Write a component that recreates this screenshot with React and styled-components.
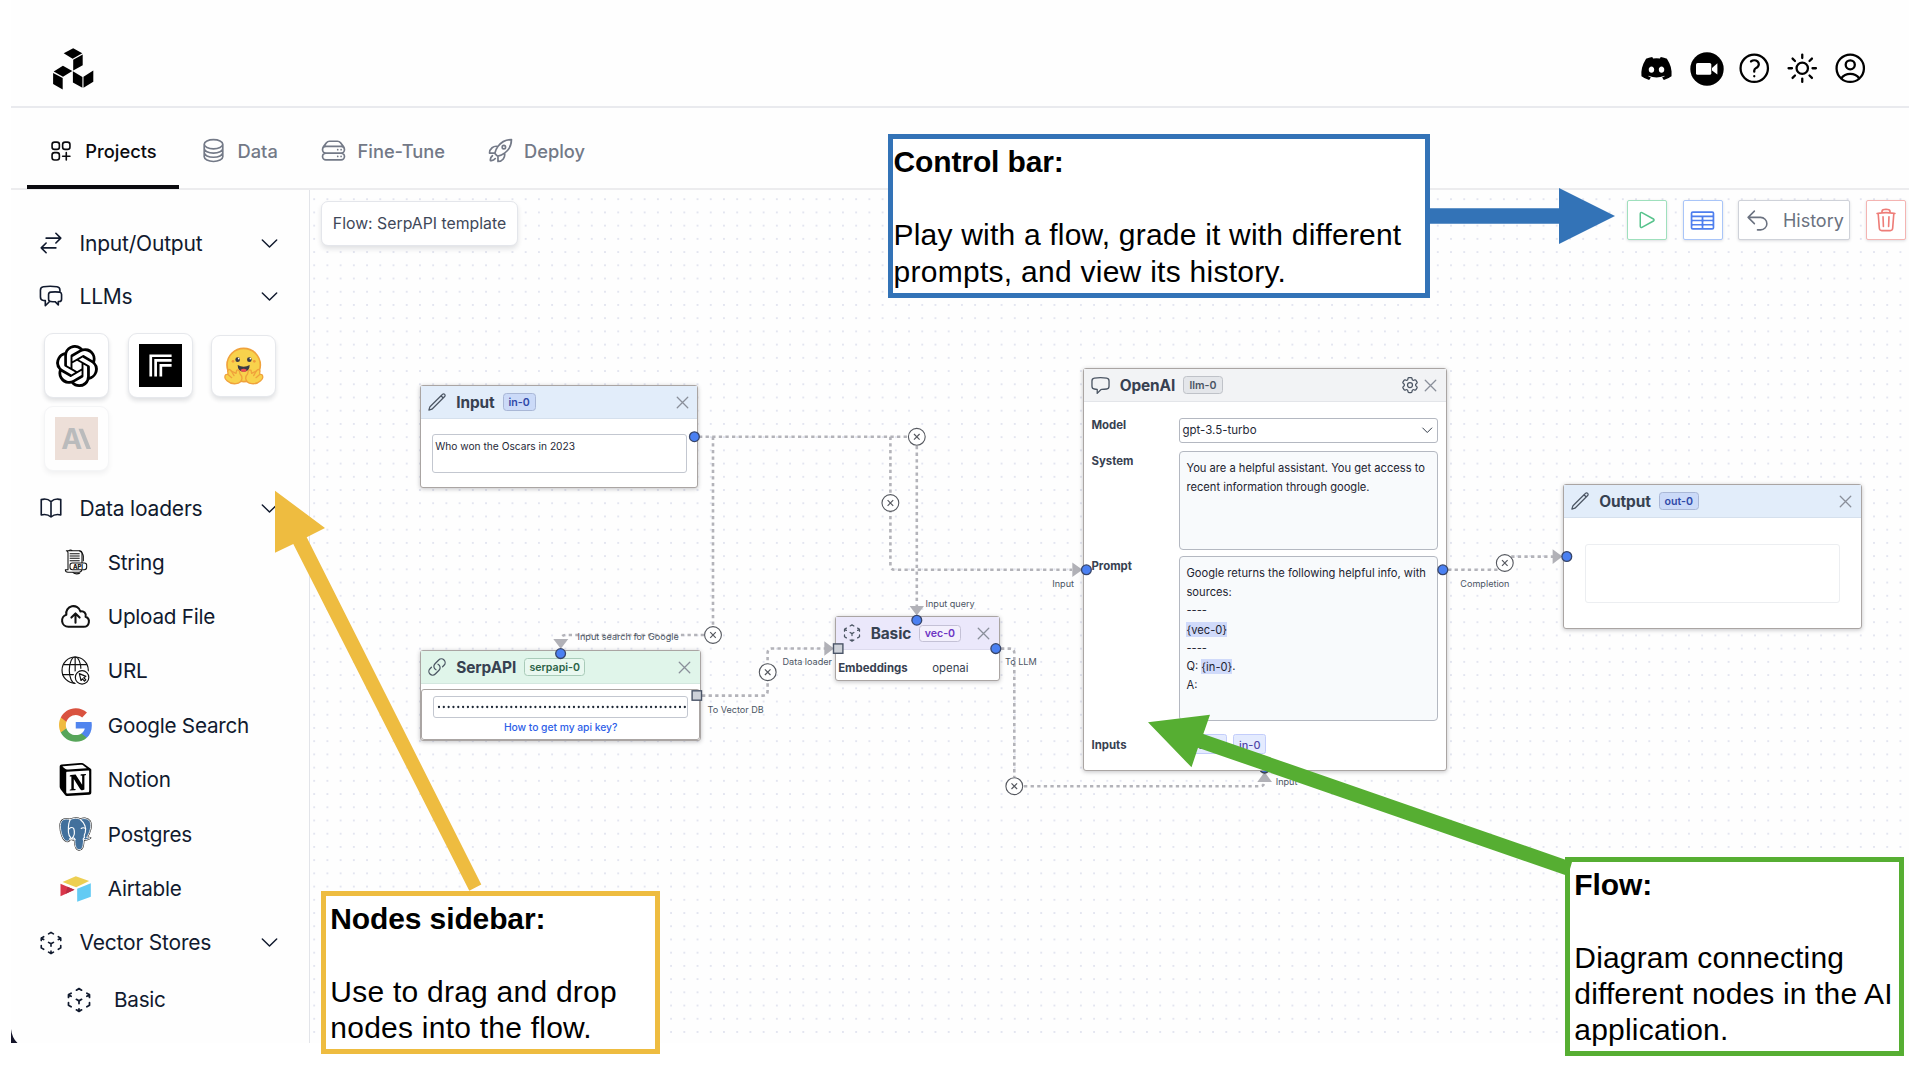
import React from "react";
import styled, { createGlobalStyle } from "styled-components";
import {
  HiOutlineSquaresPlus,
  HiOutlineCircleStack,
  HiOutlineServerStack,
  HiOutlineRocketLaunch,
  HiOutlineArrowsRightLeft,
  HiOutlineChatBubbleLeftRight,
  HiOutlineChatBubbleLeft,
  HiOutlineBookOpen,
  HiOutlineChevronDown,
  HiOutlineCloudArrowUp,
  HiOutlineCubeTransparent,
  HiOutlinePencil,
  HiOutlineLink,
  HiOutlineXMark,
  HiOutlineCog6Tooth,
  HiOutlinePlay,
  HiOutlineTableCells,
  HiOutlineArrowUturnLeft,
  HiOutlineTrash,
  HiOutlineQuestionMarkCircle,
  HiOutlineSun,
  HiOutlineUserCircle,
} from "react-icons/hi2";
import { SiOpenai, SiNotion } from "react-icons/si";
import { FaDiscord } from "react-icons/fa";

const ORIGIN_X = 310;
const ORIGIN_Y = 190;
const UI_FONT = '"Inter", "Liberation Sans", sans-serif';
const NOTE_FONT = '"Liberation Sans", Arial, sans-serif';

const GlobalStyle = createGlobalStyle`
  * { box-sizing: border-box; }
  html, body { margin: 0; padding: 0; background: #fff; }
  body { font-family: ${UI_FONT}; color: #0f172a; overflow: hidden; }
  svg { display: block; flex: none; }
`;

/* ---------- shell ---------- */

const Page = styled.div`
  position: relative;
  width: 1920px;
  height: 1080px;
  overflow: hidden;
  background: #fff;
`;

const Shell = styled.div`
  display: flex;
  flex-direction: column;
  width: 1898px;
  height: 1043px;
  margin-left: 11px;
  background: #fefefe;
`;

const Header = styled.header`
  display: flex;
  justify-content: space-between;
  align-items: center;
  height: 108px;
  padding: 31px 40.5px 0 41.5px;
  border-bottom: 2px solid #e9eaee;
`;

const HeaderActions = styled.div`
  display: flex;
  align-items: center;
  color: #000;
  gap: 11.6px;
`;

const DiscordIcon = styled(FaDiscord)`
  margin-right: 6px;
`;

const TabBar = styled.nav`
  display: flex;
  align-items: stretch;
  height: 82px;
  padding-left: 16px;
  border-bottom: 2px solid #ececee;
`;

const Tab = styled.div`
  display: flex;
  align-items: center;
  gap: ${(p) => p.$gap}px;
  width: ${(p) => p.$width}px;
  padding: 8px 0 0 ${(p) => p.$pad}px;
  margin-bottom: -1px;
  border-bottom: 4px solid ${(p) => (p.$active ? "#0b0b0f" : "transparent")};
  color: ${(p) => (p.$active ? "#0b0b0f" : "#737987")};
  font-size: 18.3px;
  font-weight: 500;
  white-space: nowrap;
`;

const Body = styled.main`
  display: flex;
  flex: 1;
  min-height: 0;
`;

const CornerShade = styled.svg`
  position: absolute;
  left: 11px;
  top: 1029px;
`;

/* ---------- sidebar ---------- */

const Sidebar = styled.aside`
  display: flex;
  flex-direction: column;
  width: 299px;
  padding-top: 26.5px;
  border-right: 1px solid #e2e4e9;
`;

const Section = styled.div`
  display: flex;
  align-items: center;
  flex: none;
  height: 53px;
  padding: 0 28.5px 0 27px;
  font-size: 21px;
  letter-spacing: -0.2px;
  color: #111a2e;
`;

const SectionTitle = styled.span`
  flex: 1;
  margin-left: 15.5px;
  white-space: nowrap;
`;

const Tiles = styled.div`
  display: flex;
  flex-wrap: wrap;
  align-items: center;
  gap: 7px 18.5px;
  padding: 10.5px 28px 10.5px 33px;
  height: 159px;
`;

const Tile = styled.div`
  display: flex;
  align-items: center;
  justify-content: center;
  width: 65px;
  height: ${(p) => p.$height || 65}px;
  border: 1.5px solid #e6e8ec;
  border-radius: 9px;
  background: #fff;
  box-shadow: 0 3px 4px rgba(15, 23, 42, 0.12);
  opacity: ${(p) => (p.$faded ? 0.4 : 1)};
`;

const Loaders = styled.div`
  display: flex;
  flex-direction: column;
  padding: 0.5px 0;
`;

const SubItem = styled.div`
  display: flex;
  align-items: center;
  height: ${(p) => p.$height || 54.4}px;
  padding-left: ${(p) => p.$indent || 48}px;
  gap: ${(p) => p.$gap || 15.8}px;
  font-size: 20.7px;
  letter-spacing: -0.25px;
  color: #111a2e;
  white-space: nowrap;
`;

const SubIcon = styled.span`
  display: flex;
  align-items: center;
  justify-content: center;
  width: ${(p) => p.$size || 33}px;
`;

/* ---------- canvas ---------- */

const Canvas = styled.section`
  position: relative;
  flex: 1;
  overflow: hidden;
  background-color: #fefefe;
  background-image: radial-gradient(circle, #e3e5f0 0.7px, transparent 1.1px);
  background-size: 13.22px 13.22px;
  background-position: 10.8px 2.6px;
`;

const EdgeLayer = styled.svg`
  position: absolute;
  left: 0;
  top: 0;
  pointer-events: none;
`;

const FlowChip = styled.div`
  position: absolute;
  left: 11px;
  top: 10.5px;
  display: flex;
  align-items: center;
  justify-content: center;
  width: 197px;
  height: 45px;
  border: 1.5px solid #e4e6eb;
  border-radius: 7px;
  background: #fff;
  box-shadow: 0 3px 5px rgba(15, 23, 42, 0.12);
  color: #3f4859;
  font-size: 15.8px;
  white-space: nowrap;
`;

const Controls = styled.div`
  position: absolute;
  left: 1317px;
  top: 10.3px;
  display: flex;
  gap: 15.7px;
`;

const ControlButton = styled.button`
  display: flex;
  align-items: center;
  justify-content: center;
  gap: 13px;
  width: ${(p) => p.$width || 40}px;
  height: 40px;
  padding: 0;
  border: 1.6px solid ${(p) => p.$border};
  border-radius: 2px;
  background: #fff;
  box-shadow: 0 1px 3px rgba(15, 23, 42, 0.14);
  color: ${(p) => p.$color};
  font-family: inherit;
  font-size: 18px;
`;

const Node = styled.article`
  position: absolute;
  left: ${(p) => p.$x - ORIGIN_X}px;
  top: ${(p) => p.$y - ORIGIN_Y}px;
  width: ${(p) => p.$w}px;
  height: ${(p) => p.$h}px;
  display: flex;
  flex-direction: column;
  border: 1.5px solid #aaa5a3;
  border-radius: 3px;
  background: #fff;
  box-shadow: 0 1px 4px rgba(40, 40, 50, 0.28);
`;

const NodeHeader = styled.header`
  display: flex;
  align-items: center;
  flex: none;
  height: ${(p) => p.$height || 33}px;
  padding: 0 4.5px 0 6px;
  background: ${(p) => p.$bg};
  border-bottom: 1px solid rgba(120, 130, 150, 0.12);
  color: #4b5563;
`;

const NodeTitle = styled.h3`
  margin: 0 0 0 9px;
  font-size: 15.4px;
  font-weight: 700;
  letter-spacing: -0.1px;
  color: #374151;
`;

const NodeTag = styled.span`
  display: flex;
  align-items: center;
  justify-content: center;
  width: ${(p) => p.$width}px;
  height: 17.5px;
  margin-left: 8px;
  border: 1.3px solid ${(p) => p.$border};
  border-radius: 3.5px;
  background: ${(p) => p.$bg};
  color: ${(p) => p.$color};
  font-size: 10.6px;
  font-weight: 600;
`;

const HeaderSpace = styled.span`
  flex: 1;
`;

const CloseIcon = styled(HiOutlineXMark)`
  width: 21px;
  height: 21px;
  color: #8a8f9a;
`;

const NodeContent = styled.div`
  flex: 1;
  display: flex;
  flex-direction: column;
  padding: ${(p) => p.$pad};
`;

const TextBox = styled.div`
  height: ${(p) => p.$height}px;
  padding: 3px 2.5px;
  border: 1px solid ${(p) => p.$border || "#c3c7d0"};
  border-radius: 3px;
  background: #fff;
  color: #1f2937;
  font-size: 10.2px;
  line-height: 16px;
  white-space: nowrap;
`;

const SerpPanel = styled.div`
  flex: 1;
  display: flex;
  flex-direction: column;
  align-items: center;
  margin-top: 5px;
  padding: 5.5px 11px 0 11px;
  border: 1.5px solid #aaa5a3;
  border-radius: 3px;
`;

const KeyInput = styled.div`
  display: flex;
  align-items: center;
  align-self: stretch;
  height: 22.5px;
  padding-left: 3px;
  overflow: hidden;
  border: 1px solid #c3c7d0;
  border-radius: 3px;
`;

const KeyLink = styled.a`
  margin-top: 0.5px;
  color: #2f5fe8;
  font-size: 10.35px;
  font-weight: 500;
  letter-spacing: -0.05px;
  line-height: 16px;
  white-space: nowrap;
`;

const EmbeddingRow = styled.div`
  display: flex;
  align-items: center;
  flex: 1;
  padding: 5px 0 0 2.5px;
  color: #374151;
  font-size: 11.4px;
`;

const EmbeddingLabel = styled.span`
  width: 94px;
  font-weight: 700;
`;

const FormGrid = styled.div`
  display: grid;
  grid-template-columns: 87.5px 259px;
  grid-template-rows: 25px 107.5px 171px 36px;
  padding: 16px 0 0 7.8px;
`;

const FormLabel = styled.label`
  padding-top: ${(p) => p.$top || 0}px;
  color: #374151;
  font-size: 11.4px;
  line-height: 14px;
  font-weight: 700;
`;

const FormSelect = styled.div`
  display: flex;
  align-items: center;
  justify-content: space-between;
  padding: 0 2px 0 2.5px;
  border: 1.2px solid #b4b8c1;
  border-radius: 3px;
  font-size: 11.5px;
  color: #1f2937;
`;

const FormArea = styled.div`
  margin-top: ${(p) => p.$top}px;
  padding: 7.5px 0 0 6.5px;
  border: 1.2px solid #b4b8c1;
  border-radius: 4px;
  background: #f8fafc;
  color: #1c2330;
  font-size: 11.15px;
  line-height: 18.6px;
`;

const AreaLine = styled.div`
  height: 18.6px;
  white-space: pre;
`;

const Variable = styled.mark`
  padding: 0.5px 0;
  background: #d0dafa;
  color: inherit;
`;

const InputTags = styled.div`
  display: flex;
  gap: 5.5px;
  padding: 13px 0 0 7.5px;
`;

const InputTag = styled.span`
  display: flex;
  align-items: center;
  justify-content: center;
  width: ${(p) => p.$width}px;
  height: 20px;
  padding-top: 1px;
  border: 1px solid #c3cdfb;
  border-radius: 2.5px;
  background: #e4ebfe;
  color: #4f46a8;
  font-size: 10.9px;
  font-weight: 500;
`;

const EdgeLabel = styled.span`
  position: absolute;
  left: ${(p) => p.$x - ORIGIN_X}px;
  top: ${(p) => p.$y - ORIGIN_Y - 6}px;
  color: #4b5563;
  font-size: 9.1px;
  line-height: 12px;
  white-space: nowrap;
`;

/* ---------- annotations ---------- */

const Note = styled.div`
  position: absolute;
  left: ${(p) => p.$x}px;
  top: ${(p) => p.$y}px;
  width: ${(p) => p.$w}px;
  height: ${(p) => p.$h}px;
  padding: 5.3px 0 0 ${(p) => p.$left}px;
  border: 5px solid ${(p) => p.$color};
  background: #fff;
  color: #000;
  font-family: ${NOTE_FONT};
  font-size: 30px;
  line-height: 36.4px;
  white-space: nowrap;
`;

const NoteTitle = styled.div`
  margin-bottom: 36.4px;
  font-weight: 700;
  letter-spacing: -0.12px;
`;

const NoteLine = styled.div`
  letter-spacing: ${(p) => p.$track || 0.2}px;
`;

const ArrowLayer = styled.svg`
  position: absolute;
  left: 0;
  top: 0;
  pointer-events: none;
`;

/* ---------- drawings ---------- */

const BrandLogo = () => (
  <svg width="41" height="42" viewBox="53.3 48 41 42" fill="#000">
    <polygon points="64,53.3 73.5,48.3 82.6,53.3 72.9,58.8" />
    <polygon points="73.5,59.8 83,54.5 83,65.3 73.5,70.5" />
    <polygon points="54,71.5 63.2,65.8 72.6,70.9 63.3,76.7" />
    <polygon points="53.4,73 63,78 63,89.4 53.4,84" />
    <polygon points="73.2,71.3 82.7,77 82.7,87.8 73.2,82.5" />
    <polygon points="83.8,76.7 93.6,70.6 93.6,81.7 83.8,87.8" />
  </svg>
);

const VideoBadge = () => (
  <svg width="34" height="34" viewBox="0 0 34 34">
    <circle cx="17" cy="17" r="16.7" fill="#000" />
    <rect x="6" y="11" width="15.3" height="11.8" rx="1.6" fill="#fff" />
    <polygon points="22,16 27.4,11.2 27.4,22.6 22,18.4" fill="#fff" />
  </svg>
);

const LayersMark = () => (
  <svg width="43" height="43" viewBox="0 0 128 128">
    <rect width="128" height="128" fill="#000" />
    <g fill="none" stroke="#fff" strokeWidth="8">
      <path d="M35 97V35H97" />
      <path d="M49.5 97V49H97" />
      <path d="M65 97V63.5H97" />
    </g>
  </svg>
);

const HugFace = () => (
  <svg width="40" height="38" viewBox="0 0 120 114">
    <circle cx="59" cy="54" r="50" fill="#f8d24c" stroke="#f0a23c" strokeWidth="5" />
    <circle cx="41" cy="38" r="7" fill="#3a3b45" />
    <circle cx="76" cy="38" r="7" fill="#3a3b45" />
    <circle cx="44" cy="35" r="2.4" fill="#fff" />
    <circle cx="79" cy="35" r="2.4" fill="#fff" />
    <circle cx="27" cy="43" r="4" fill="#f09a3c" />
    <circle cx="91" cy="43" r="4" fill="#f09a3c" />
    <path d="M41 54q18 10 36 0q0 20-18 20t-18-20z" fill="#3a3b45" />
    <path d="M49 69q10-7 20 0q-4 6-10 6t-10-6z" fill="#ef4e4e" />
    <g fill="#f8d24c" stroke="#f0a23c" strokeWidth="4" strokeLinejoin="round" strokeLinecap="round">
      <path d="M22 72q-7-9-11 0q2 8 0 10q-8-1-8 6q-2 7 6 13q12 11 27 9q16-2 18-16q0-8-6-14q-2-15-10-10l-2 9z" />
      <path d="M97 72q7-9 11 0q-2 8 0 10q8-1 8 6q2 7-6 13q-12 11-27 9q-16-2-18-16q0-8 6-14q2-15 10-10l2 9z" />
      <path d="M22 72l8 14M11 82l12 10M97 72l-8 14M108 82l-12 10" />
    </g>
  </svg>
);

const LetterMark = () => (
  <svg width="43" height="43" viewBox="0 0 43 43">
    <rect width="43" height="43" fill="#d6b3a0" />
    <text x="6.2" y="32" fontFamily="Inter, sans-serif" fontSize="28" fontWeight="700" fill="#55585c">
      A
    </text>
    <polygon points="23.5,11.7 28,11.7 36,32 31.5,32" fill="#55585c" />
  </svg>
);

const ScrollIcon = () => (
  <svg width="24" height="26" viewBox="0 0 72 78" fill="none" stroke="#111" strokeWidth="3.2" strokeLinejoin="round">
    <path d="M10 5h36q8 0 8 8v45q0 12-10 12H12q-8 0-8-8h8V12q0-7-5-7z" />
    <path d="M14 5q6-4 11 0M46 5q10 4 12 16v16M26 70q10 8 22 2" />
    <path d="M17 14h30M17 21h30M17 28h30M17 35h30" />
    <rect x="18" y="42" width="50" height="20" rx="7" fill="#fff" />
    <text x="27" y="59" fontFamily="Inter, sans-serif" fontSize="18" fontWeight="800" fill="#111" stroke="none">
      API
    </text>
  </svg>
);

const GlobeIcon = () => (
  <svg width="29" height="29" viewBox="0 0 84 84" fill="none" stroke="#111" strokeWidth="3.4">
    <circle cx="41" cy="41" r="38" />
    <ellipse cx="41" cy="41" rx="17" ry="38" />
    <path d="M41 3v42M7 25h68M3 54h42" />
    <circle cx="61" cy="62" r="24" fill="#fff" stroke="#fff" />
    <circle cx="61" cy="62" r="19.5" />
    <path d="M53 51l5 20 4-5 6 7 4-4-6-6 6-4z" strokeLinejoin="round" />
  </svg>
);

const GoogleG = () => (
  <svg width="33.5" height="34" viewBox="1 1 22 22">
    <path fill="#5084ee" d="M22.56 12.25c0-.78-.07-1.53-.2-2.25H12v4.26h5.92c-.26 1.37-1.04 2.53-2.21 3.31v2.77h3.57c2.08-1.92 3.28-4.74 3.28-8.09z" />
    <path fill="#57a55a" d="M12 23c2.97 0 5.46-.98 7.28-2.66l-3.57-2.77c-.98.66-2.23 1.06-3.71 1.06-2.86 0-5.29-1.93-6.16-4.53H2.18v2.84C3.99 20.53 7.7 23 12 23z" />
    <path fill="#f0bb40" d="M5.84 14.09c-.22-.66-.35-1.36-.35-2.09s.13-1.43.35-2.09V7.07H2.18C1.43 8.55 1 10.22 1 12s.43 3.45 1.18 4.93l2.85-2.22.81-.62z" />
    <path fill="#d9523f" d="M12 5.38c1.62 0 3.06.56 4.21 1.64l3.15-3.15C17.45 2.09 14.97 1 12 1 7.7 1 3.99 3.47 2.18 7.07l3.66 2.84c.87-2.6 3.3-4.53 6.16-4.53z" />
  </svg>
);

const Elephant = () => {
  const body =
    "M32 8C20 3 4 6 4 26c0 18 8 46 20 46 5 0 8-4 11-8 3 3 8 4 12 3 0 12 1 29 12 30 11 1 13-10 14-30 8 1 16-1 20-5-3-1-8 0-11-1C92 47 98 26 92 13 84 2 70 4 64 7 54 2 42 3 32 8z";
  return (
    <svg width="33" height="34" viewBox="0 0 98 101" strokeLinejoin="round" strokeLinecap="round">
      <path d={body} fill="#111" stroke="#222" strokeWidth="6" />
      <path d={body} fill="#42709c" stroke="#fff" strokeWidth="2.6" />
      <g fill="none" stroke="#fff" strokeWidth="3.4">
        <path d="M33 9c-7 12-5 26-5 36 0 8 4 14 9 19" />
        <path d="M64 8c12 9 18 26 14 38-3 6-4 12-3 15" />
        <path d="M30 35c5-5 12-5 14 0 3 9 3 18-4 27 4 0 7 1 8 5" />
        <path d="M66 34c4-3 9-2 13 0M40 63c-3 3-6 3-9 2M76 61c-3 1-5 3-4 7" />
      </g>
    </svg>
  );
};

const Blocks = () => (
  <svg width="31" height="26" viewBox="180 346 92 78">
    <polygon points="227,347 267,361 228,380 187,364" fill="#edcf52" />
    <polygon points="181,369 181,407 223,387" fill="#d9364a" />
    <polygon points="181,407 196,400 202,378 223,387" fill="#b92c42" />
    <polygon points="231,384 272,368 272,408 231,423" fill="#63cbf4" />
  </svg>
);

const KeyDots = () => (
  <svg width="250" height="4" viewBox="0 0 250 4">
    <line x1="2" y1="2" x2="248.5" y2="2" stroke="#1f2937" strokeWidth="2.3" strokeLinecap="round" strokeDasharray="0 4.82" />
  </svg>
);

/* ---------- edges ---------- */

const EDGES = [
  "M699 436.7H908",
  "M916.8 446V613",
  "M890.4 436.7V565Q890.4 569.8 895 569.8H1072",
  "M713 436.7V626",
  "M704 635H566Q561 635 561 639",
  "M702 695.6H763Q767.6 695.6 767.6 691V653Q767.6 648.5 772 648.5H826",
  "M1001 648.6H1010Q1014.3 648.6 1014.3 653V777",
  "M1024 786.2H1260Q1264.5 786.2 1264.5 781",
  "M1448 569.8H1500Q1504.6 569.8 1504.6 565V561Q1504.6 556.6 1509 556.6H1553",
];

const ARROW_TIPS = [
  "909.6,606 924,606 916.8,615.5",
  "1072.3,562.5 1072.3,577 1082.5,569.8",
  "553.3,639 568.3,639 560.8,648.8",
  "824.3,641.3 824.3,655.8 834,648.5",
  "1257.3,782 1272,782 1264.6,772",
  "1552.6,549.3 1552.6,564 1562.5,556.6",
];

const CUTTERS = [
  [916.8, 436.8],
  [890.4, 503],
  [713, 635],
  [767.7, 672.2],
  [1014.3, 786.2],
  [1504.8, 563],
];

const PORTS = [
  [694.4, 436.7],
  [560.6, 653.6],
  [916.8, 620.2],
  [995.8, 648.6],
  [1086.4, 569.8],
  [1442.8, 569.8],
  [1566.8, 556.5],
];

const SQUARE_PORTS = [
  [696.8, 695.5],
  [838.2, 648.6],
];

const canvasView = `${ORIGIN_X} ${ORIGIN_Y} 1599 853`;

const Edges = () => (
  <EdgeLayer width="1599" height="853" viewBox={canvasView}>
    <g fill="none" stroke="#b3b3b9" strokeWidth="2.6" strokeDasharray="3.3 3.3">
      {EDGES.map((d) => (
        <path key={d} d={d} />
      ))}
    </g>
    {ARROW_TIPS.map((p) => (
      <polygon key={p} points={p} fill="#b1b1b7" />
    ))}
    <circle cx="1264.6" cy="768" r="5" fill="#4a80f2" stroke="#374151" strokeWidth="1.4" />
    {CUTTERS.map(([x, y]) => (
      <g key={`${x}-${y}`} stroke="#55585f" strokeWidth="1.1">
        <circle cx={x} cy={y} r="8.4" fill="#fff" />
        <path d={`M${x - 2.8} ${y - 2.8}l5.6 5.6M${x + 2.8} ${y - 2.8}l-5.6 5.6`} strokeWidth="1.2" />
      </g>
    ))}
  </EdgeLayer>
);

const Ports = () => (
  <EdgeLayer width="1599" height="853" viewBox={canvasView}>
    {PORTS.map(([x, y]) => (
      <circle key={`${x}-${y}`} cx={x} cy={y} r="4.9" fill="#4a80f2" stroke="#37456a" strokeWidth="1.3" />
    ))}
    {SQUARE_PORTS.map(([x, y]) => (
      <rect key={`${x}-${y}`} x={x - 4.7} y={y - 4.7} width="9.4" height="9.4" fill="#ced2d9" stroke="#4b5568" strokeWidth="1.4" />
    ))}
  </EdgeLayer>
);

/* ---------- data ---------- */

const LOADERS = [
  { label: "String", icon: <ScrollIcon /> },
  { label: "Upload File", icon: <HiOutlineCloudArrowUp size={33} color="#111" /> },
  { label: "URL", icon: <GlobeIcon /> },
  { label: "Google Search", icon: <GoogleG /> },
  { label: "Notion", icon: <SiNotion size={33} color="#000" /> },
  { label: "Postgres", icon: <Elephant /> },
  { label: "Airtable", icon: <Blocks /> },
];

const EDGE_LABELS = [
  ["Input search for Google", 577.5, 636.5],
  ["To Vector DB", 707.5, 709.5],
  ["Data loader", 782.5, 662.3],
  ["Input query", 925.5, 603.5],
  ["To LLM", 1005, 662.3],
  ["Input", 1052.3, 583.7],
  ["Completion", 1460.3, 583.7],
  ["Input", 1275.7, 782.3],
];

const BLUE_TAG = { $bg: "#cbdaf8", $border: "#a9b7d6", $color: "#2f49a8" };

const SidebarSection = ({ icon, title }) => (
  <Section>
    {icon}
    <SectionTitle>{title}</SectionTitle>
    <HiOutlineChevronDown size={23} />
  </Section>
);

export default function App() {
  return (
    <Page>
      <GlobalStyle />
      <Shell>
        <Header>
          <BrandLogo />
          <HeaderActions>
            <DiscordIcon size={33} />
            <VideoBadge />
            <HiOutlineQuestionMarkCircle size={36.5} />
            <HiOutlineSun size={36.5} />
            <HiOutlineUserCircle size={36.5} />
          </HeaderActions>
        </Header>

        <TabBar>
          <Tab $active $width={152} $pad={21} $gap={11.3}>
            <HiOutlineSquaresPlus size={26} />
            Projects
          </Tab>
          <Tab $width={119} $pad={21} $gap={10.5}>
            <HiOutlineCircleStack size={27} />
            Data
          </Tab>
          <Tab $width={168} $pad={21.5} $gap={11}>
            <HiOutlineServerStack size={27} />
            Fine-Tune
          </Tab>
          <Tab $width={140} $pad={20.5} $gap={10.5}>
            <HiOutlineRocketLaunch size={27} />
            Deploy
          </Tab>
        </TabBar>

        <Body>
          <Sidebar>
            <SidebarSection icon={<HiOutlineArrowsRightLeft size={26} />} title="Input/Output" />
            <SidebarSection icon={<HiOutlineChatBubbleLeftRight size={26} />} title="LLMs" />
            <Tiles>
              <Tile>
                <SiOpenai size={42} color="#000" />
              </Tile>
              <Tile>
                <LayersMark />
              </Tile>
              <Tile $height={62}>
                <HugFace />
              </Tile>
              <Tile $faded>
                <LetterMark />
              </Tile>
            </Tiles>
            <SidebarSection icon={<HiOutlineBookOpen size={26} />} title="Data loaders" />
            <Loaders>
              {LOADERS.map((item) => (
                <SubItem key={item.label}>
                  <SubIcon>{item.icon}</SubIcon>
                  {item.label}
                </SubItem>
              ))}
            </Loaders>
            <SidebarSection icon={<HiOutlineCubeTransparent size={26} />} title="Vector Stores" />
            <SubItem $indent={54} $gap={21} $height={61}>
              <SubIcon $size={28}>
                <HiOutlineCubeTransparent size={28} />
              </SubIcon>
              Basic
            </SubItem>
          </Sidebar>

          <Canvas>
            <Edges />
            <FlowChip>Flow: SerpAPI template</FlowChip>
            <Controls>
              <ControlButton $border="#9fe0bd" $color="#57c38c">
                <HiOutlinePlay size={24} />
              </ControlButton>
              <ControlButton $border="#a9c5f8" $color="#4f7fee">
                <HiOutlineTableCells size={27} />
              </ControlButton>
              <ControlButton $width={112} $border="#cfd2d9" $color="#6b7280">
                <HiOutlineArrowUturnLeft size={25} />
                History
              </ControlButton>
              <ControlButton $border="#f4b4b2" $color="#ee7d78">
                <HiOutlineTrash size={26} />
              </ControlButton>
            </Controls>

            <Node $x={420.3} $y={385} $w={278} $h={103}>
              <NodeHeader $bg="#e2edfa">
                <HiOutlinePencil size={20} />
                <NodeTitle>Input</NodeTitle>
                <NodeTag $width={33} {...BLUE_TAG}>
                  in-0
                </NodeTag>
                <HeaderSpace />
                <CloseIcon />
              </NodeHeader>
              <NodeContent $pad="15px 10.5px 0 10.5px">
                <TextBox $height={38.5}>Who won the Oscars in 2023</TextBox>
              </NodeContent>
            </Node>

            <Node $x={420.3} $y={650} $w={280.7} $h={91}>
              <NodeHeader $bg="#e0f5ea">
                <HiOutlineLink size={20} />
                <NodeTitle>SerpAPI</NodeTitle>
                <NodeTag $width={61} $bg="#e9f8f0" $border="#a9cbb9" $color="#2b6247">
                  serpapi-0
                </NodeTag>
                <HeaderSpace />
                <CloseIcon />
              </NodeHeader>
              <SerpPanel>
                <KeyInput>
                  <KeyDots />
                </KeyInput>
                <KeyLink>How to get my api key?</KeyLink>
              </SerpPanel>
            </Node>

            <Node $x={834.7} $y={616.3} $w={165} $h={64.7}>
              <NodeHeader $bg="#ebe8fb">
                <HiOutlineCubeTransparent size={20} />
                <NodeTitle>Basic</NodeTitle>
                <NodeTag $width={41.5} $bg="#f3f0fc" $border="#c4c1d6" $color="#6d35c4">
                  vec-0
                </NodeTag>
                <HeaderSpace />
                <CloseIcon />
              </NodeHeader>
              <EmbeddingRow>
                <EmbeddingLabel>Embeddings</EmbeddingLabel>
                openai
              </EmbeddingRow>
            </Node>

            <Node $x={1082.7} $y={368.3} $w={364} $h={402.7}>
              <NodeHeader $bg="#f2f3f5" $height={32.5}>
                <HiOutlineChatBubbleLeft size={21} />
                <NodeTitle>OpenAI</NodeTitle>
                <NodeTag $width={39.5} $bg="#e4e6ea" $border="#bfc2c8" $color="#4b5563">
                  llm-0
                </NodeTag>
                <HeaderSpace />
                <HiOutlineCog6Tooth size={20} />
                <CloseIcon />
              </NodeHeader>
              <FormGrid>
                <FormLabel>Model</FormLabel>
                <FormSelect>
                  gpt-3.5-turbo
                  <HiOutlineChevronDown size={14.5} />
                </FormSelect>
                <FormLabel $top={11}>System</FormLabel>
                <FormArea $top={8}>
                  <AreaLine>You are a helpful assistant. You get access to</AreaLine>
                  <AreaLine>recent information through google.</AreaLine>
                </FormArea>
                <FormLabel $top={8.5}>Prompt</FormLabel>
                <FormArea $top={5.5}>
                  <AreaLine>Google returns the following helpful info, with</AreaLine>
                  <AreaLine>sources:</AreaLine>
                  <AreaLine>----</AreaLine>
                  <AreaLine>
                    <Variable>{"{vec-0}"}</Variable>
                  </AreaLine>
                  <AreaLine>----</AreaLine>
                  <AreaLine>
                    {"Q: "}
                    <Variable>{"{in-0}"}</Variable>.
                  </AreaLine>
                  <AreaLine>A:</AreaLine>
                </FormArea>
                <FormLabel $top={16.5}>Inputs</FormLabel>
                <InputTags>
                  <InputTag $width={41}>vec-0</InputTag>
                  <InputTag $width={33.5}>in-0</InputTag>
                </InputTags>
              </FormGrid>
            </Node>

            <Node $x={1563.3} $y={484} $w={298.7} $h={144.5}>
              <NodeHeader $bg="#e2edfa">
                <HiOutlinePencil size={20} />
                <NodeTitle>Output</NodeTitle>
                <NodeTag $width={40} {...BLUE_TAG}>
                  out-0
                </NodeTag>
                <HeaderSpace />
                <CloseIcon />
              </NodeHeader>
              <NodeContent $pad="26px 21px 0 20.5px">
                <TextBox $height={58.5} $border="#eceef1" />
              </NodeContent>
            </Node>

            {EDGE_LABELS.map(([text, x, y]) => (
              <EdgeLabel key={text + x} $x={x} $y={y}>
                {text}
              </EdgeLabel>
            ))}
            <Ports />
          </Canvas>
        </Body>
      </Shell>

      <CornerShade width="7" height="14" viewBox="0 0 7 14">
        <path d="M0 0Q1 9 6.5 14H0z" fill="#15152a" />
      </CornerShade>

      <Note $x={888} $y={134} $w={542} $h={163.5} $left={0.5} $color="#3373b7">
        <NoteTitle>Control bar:</NoteTitle>
        <NoteLine>Play with a flow, grade it with different</NoteLine>
        <NoteLine $track={0.27}>prompts, and view its history.</NoteLine>
      </Note>
      <Note $x={321} $y={890.5} $w={339} $h={163.3} $left={4.3} $color="#eebc40">
        <NoteTitle>Nodes sidebar:</NoteTitle>
        <NoteLine $track={0.24}>Use to drag and drop</NoteLine>
        <NoteLine $track={0.24}>nodes into the flow.</NoteLine>
      </Note>
      <Note $x={1565.3} $y={856.5} $w={339} $h={199.3} $left={4} $color="#56ae32">
        <NoteTitle>Flow:</NoteTitle>
        <NoteLine $track={0.17}>Diagram connecting</NoteLine>
        <NoteLine $track={0.15}>different nodes in the AI</NoteLine>
        <NoteLine>application.</NoteLine>
      </Note>

      <ArrowLayer width="1920" height="1080" viewBox="0 0 1920 1080">
        <polygon fill="#3373b7" points="1428,208.3 1559,208.3 1559,188 1615,216 1559,244 1559,223.7 1428,223.7" />
        <polygon
          fill="#eebc40"
          points="275,490.7 325,528 306.7,537.3 481.3,884.5 469.3,890.7 293.3,544 275,552.7"
        />
        <polygon
          fill="#56ae32"
          points="1148,722.3 1210,714.7 1203.3,734 1572,862 1568,876 1198,747.7 1191.5,767.3"
        />
      </ArrowLayer>
    </Page>
  );
}
